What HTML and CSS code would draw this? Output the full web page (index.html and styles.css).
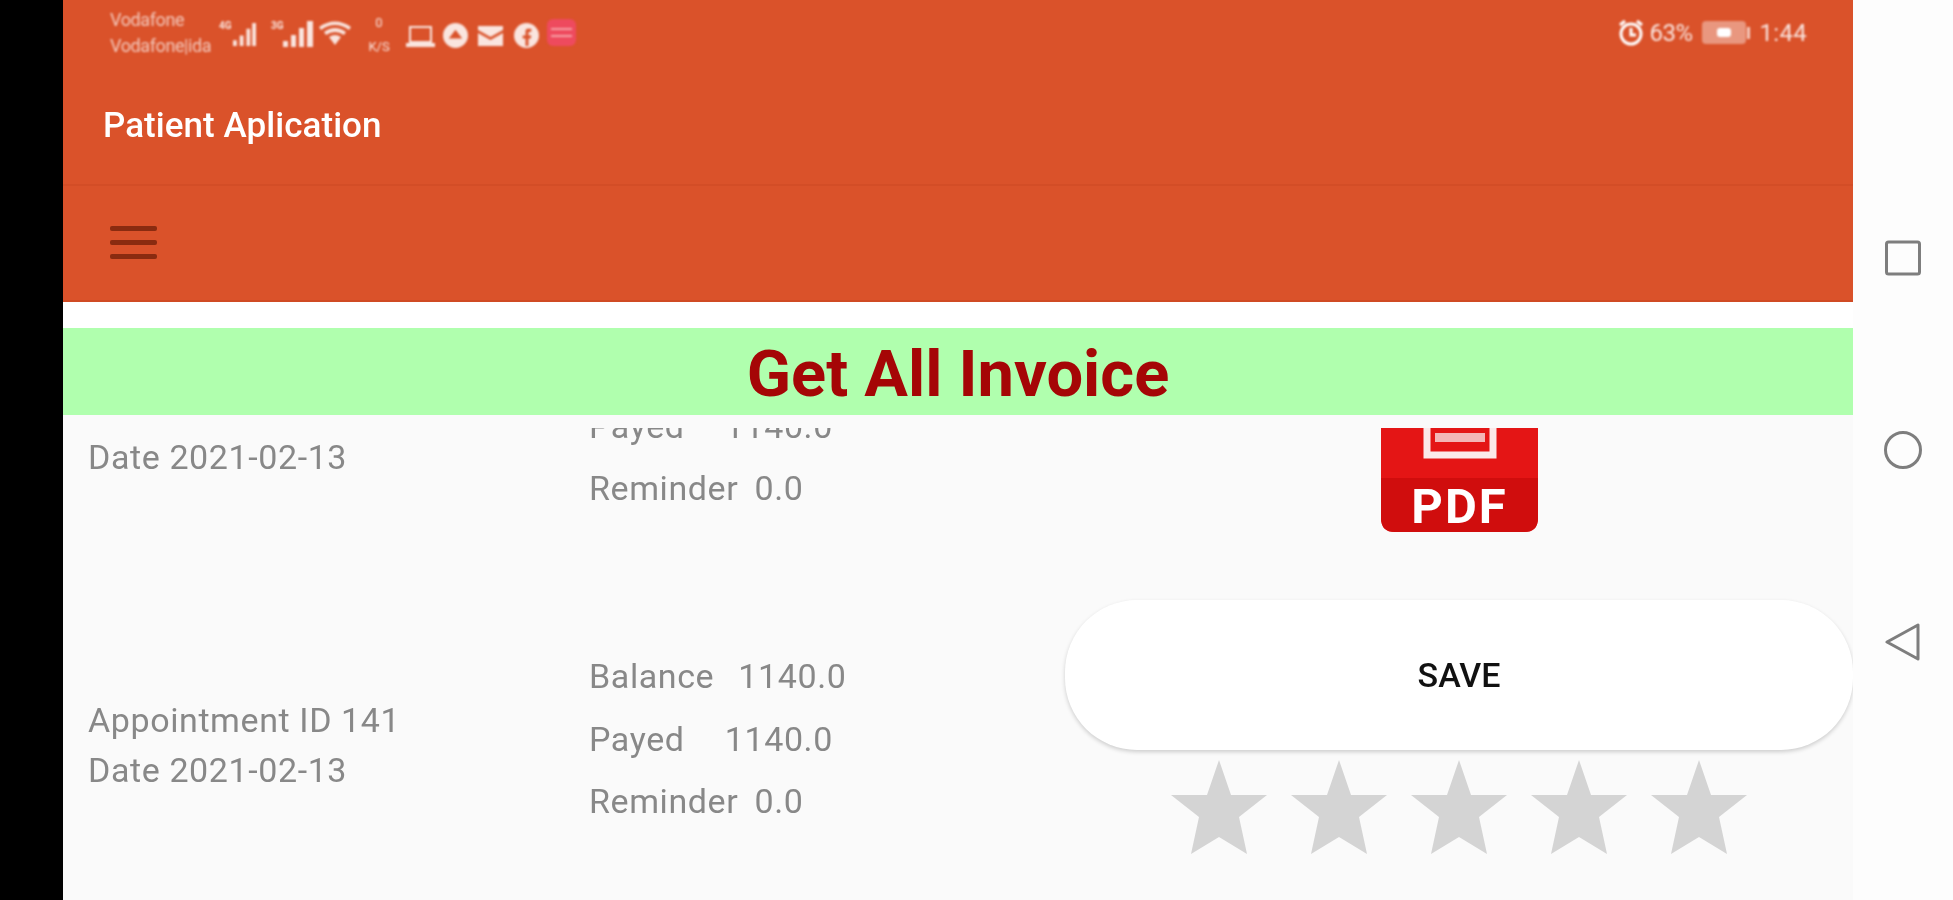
FILE: index.html
```html
<!DOCTYPE html>
<html lang="en">
<head>
    <meta charset="UTF-8">
    <title>Patient Aplication</title>
    <link rel="stylesheet" href="styles.css">
</head>
<body>
    <div class="left-edge"></div>
    <div class="app">
        <header class="header">
            <div class="status-bar">
                <div class="carriers">
                    <div>Vodafone</div>
                    <div>Vodafone|ida</div>
                </div>
                <span class="net-tag tag-4g">4G</span>
                <svg class="ic signal-a" viewBox="0 0 24 24"><path d="M0 24h4v-6H0zM7 24h4V13H7zM14 24h4V6h-4zM20 24h4V0h-4z"/></svg>
                <span class="net-tag tag-3g">3G</span>
                <svg class="ic signal-b" viewBox="0 0 30 26"><path d="M0 26h5v-6H0zM8 26h5V14H8zM16 26h5V7h-5zM24 26h6V0h-6z"/></svg>
                <svg class="ic wifi" viewBox="0 0 32 25"><path d="M0 6Q16-5 32 6l-2 3Q16-1 2 9zM5 11q11-8 22 0l-2 3q-9-6-18 0zM10 16q6-4 12 0L16 24z"/></svg>
                <div class="speed"><div>0</div><div>K/S</div></div>
                <svg class="ic laptop" viewBox="0 0 29 21"><path d="M3 0h23v17H3zM5 2v13h19V2zM0 17h29v4H0z" fill-rule="evenodd"/></svg>
                <svg class="ic round" viewBox="0 0 26 26"><path d="M13 0a13 13 0 1 0 0 26a13 13 0 1 0 0-26zM13 7l7 9H6z" fill-rule="evenodd"/></svg>
                <svg class="ic mail" viewBox="0 0 25 20"><path d="M0 0h25v4L12.500 11 0 4zM0 7l12.500 7L25 7v13H0z"/></svg>
                <svg class="ic round" viewBox="0 0 26 26"><path d="M13 0a13 13 0 1 0 0 26a13 13 0 1 0 0-26zM14 6h4v3h-2q-1 0-1 1v3h3l-.5 3H15v8h-3v-8H9v-3h3V9q0-3 2-3z" fill-rule="evenodd"/></svg>
                <div class="pink-app"><span></span><span></span></div>
                <div class="status-right">
                    <svg class="ic alarm" viewBox="0 0 26 27"><g fill="none" stroke="#fff" stroke-width="3"><circle cx="13" cy="15" r="10"/><path d="M13 9v7h5M2 6l5-4M24 6l-5-4"/></g></svg>
                    <span class="battery-pct">63%</span>
                    <div class="battery"><div class="battery-spark"></div></div>
                    <div class="battery-nub"></div>
                    <span class="clock">1:44</span>
                </div>
            </div>
            <div class="title-row">Patient Aplication</div>
            <div class="toolbar">
                <div class="menu-icon"><span></span><span></span><span></span></div>
            </div>
        </header>

        <div class="banner">Get All Invoice</div>

        <div class="content">
            <div class="list-view">
                <div class="list-inner">
                    <div class="invoice-row">
                        <div class="col-info">
                            <div>Appointment ID 141</div>
                            <div>Date 2021-02-13</div>
                        </div>
                        <div class="col-money">
                            <div>Balance   1140.0</div>
                            <div>Payed     1140.0</div>
                            <div>Reminder  0.0</div>
                        </div>
                        <div class="col-action pdf-col">
                            <svg class="pdf-icon" viewBox="0 0 157 157">
                                <path d="M0 0h157v143q0 14-14 14H14q-14 0-14-14z" fill="#e41515"/>
                                <path d="M0 103h157v40q0 14-14 14H14q-14 0-14-14z" fill="#d00d0d"/>
                                <path d="M46 30v50h66V30" fill="none" stroke="#fbe9e9" stroke-width="7"/>
                                <rect x="54" y="58" width="50" height="9" fill="#f3b6b6"/>
                                <text x="78.500" y="148" class="pdf-label" text-anchor="middle">PDF</text>
                            </svg>
                        </div>
                    </div>

                    <div class="invoice-row">
                        <div class="col-info">
                            <div>Appointment ID 141</div>
                            <div>Date 2021-02-13</div>
                        </div>
                        <div class="col-money">
                            <div>Balance   1140.0</div>
                            <div>Payed     1140.0</div>
                            <div>Reminder  0.0</div>
                        </div>
                        <div class="col-action">
                            <button class="save-btn">Save</button>
                            <div class="stars">
                                <svg viewBox="0 0 96 94"><path d="M48 0L60 35H96L68 57L76 94L48 77L20 94L28 57L0 35H36Z"/></svg>
                                <svg viewBox="0 0 96 94"><path d="M48 0L60 35H96L68 57L76 94L48 77L20 94L28 57L0 35H36Z"/></svg>
                                <svg viewBox="0 0 96 94"><path d="M48 0L60 35H96L68 57L76 94L48 77L20 94L28 57L0 35H36Z"/></svg>
                                <svg viewBox="0 0 96 94"><path d="M48 0L60 35H96L68 57L76 94L48 77L20 94L28 57L0 35H36Z"/></svg>
                                <svg viewBox="0 0 96 94"><path d="M48 0L60 35H96L68 57L76 94L48 77L20 94L28 57L0 35H36Z"/></svg>
                            </div>
                        </div>
                    </div>
                </div>
            </div>
        </div>
    </div>
    <nav class="nav-bar">
        <svg viewBox="0 0 38 38"><rect x="2.500" y="3" width="33" height="32" rx="2"/></svg>
        <svg viewBox="0 0 38 38"><circle cx="19" cy="19" r="17.500"/></svg>
        <svg viewBox="0 0 38 38"><path d="M3 19L34 2v34z" stroke-linejoin="round"/></svg>
    </nav>
</body>
</html>
```

FILE: styles.css
```css
* {
    box-sizing: border-box;
}
html, body {
    height: 100%;
}
body {
    margin: 0;
    display: flex;
    height: 900px;
    overflow: hidden;
    background: #fff;
    font-family: Roboto, 'Liberation Sans', sans-serif;
}
.left-edge {
    width: 63px;
    background: #000;
}
.app {
    width: 1790px;
    display: flex;
    flex-direction: column;
    background: #fff;
}

/* orange header */
.header {
    height: 302px;
    flex: none;
    background: #da522a;
    border-bottom: 2px solid #d04b24;
    margin-bottom: 26px;
    color: #fff;
}
.status-bar {
    height: 64px;
    display: flex;
    align-items: center;
    padding: 0 46px 0 47px;
    filter: blur(1px);
    color: rgba(255,255,255,0.85);
}
.carriers {
    width: 109px;
    font-size: 18px;
    line-height: 26px;
    letter-spacing: -0.4px;
    opacity: 0.8;
    margin-top: 2px;
    white-space: nowrap;
}
.net-tag {
    font-size: 10px;
    font-weight: 700;
    align-self: flex-start;
    margin-top: 20px;
}
.tag-4g {
    width: 14px;
}
.tag-3g {
    margin-left: 15px;
    width: 12px;
}
.ic {
    fill: rgba(255,255,255,0.85);
    flex: none;
}
.signal-a {
    width: 23px;
    height: 23px;
    margin-top: 5px;
}
.signal-b {
    width: 30px;
    height: 26px;
    margin-top: 3px;
}
.wifi {
    width: 32px;
    height: 25px;
    margin-left: 6px;
    margin-top: 3px;
}
.speed {
    width: 28px;
    margin-left: 14px;
    font-size: 13px;
    line-height: 24px;
    text-align: center;
    margin-top: 5px;
}
.laptop {
    width: 29px;
    height: 21px;
    margin-left: 13px;
    margin-top: 8px;
}
.round {
    width: 25px;
    height: 25px;
    margin-left: 8px;
    margin-top: 7px;
}
.mail {
    width: 25px;
    height: 20px;
    margin-left: 10px;
    margin-top: 7px;
}
.round + .mail + .round {
    margin-left: 11px;
}
.pink-app {
    width: 29px;
    height: 27px;
    margin-left: 8px;
    border-radius: 6px;
    background: #ee4a5e;
    display: flex;
    flex-direction: column;
    justify-content: center;
    gap: 5px;
    padding: 0 4px;
}
.pink-app span {
    height: 2px;
    background: #f7a0a6;
}
.status-right {
    margin-left: auto;
    display: flex;
    align-items: center;
    font-size: 24px;
    margin-top: 1px;
}
.alarm {
    width: 26px;
    height: 27px;
}
.battery-pct {
    margin-left: 5px;
    letter-spacing: -0.5px;
}
.battery {
    width: 44px;
    height: 23px;
    margin-left: 9px;
    border-radius: 4px;
    background: rgba(255,255,255,0.4);
    display: flex;
    align-items: center;
    justify-content: center;
}
.battery-spark {
    width: 14px;
    height: 9px;
    border-radius: 3px;
    background: #fff;
}
.battery-nub {
    width: 3px;
    height: 12px;
    margin-left: 1px;
    background: rgba(255,255,255,0.7);
}
.clock {
    margin-left: 10px;
    letter-spacing: 0.3px;
}
.title-row {
    height: 122px;
    padding: 2px 0 0 40px;
    display: flex;
    align-items: center;
    font-size: 35px;
    font-weight: 500;
    letter-spacing: 0.05px;
    filter: blur(0.5px);
    border-bottom: 2px solid #d34d26;
}
.toolbar {
    height: 114px;
    padding: 40px 0 0 47px;
}
.menu-icon {
    width: 47px;
    display: flex;
    flex-direction: column;
    gap: 9px;
    filter: blur(0.6px);
}
.menu-icon span {
    height: 5px;
    border-radius: 2px;
    background: #8a2b10;
}

/* green title */
.banner {
    height: 87px;
    flex: none;
    padding-top: 4px;
    background: #b0ffae;
    color: #a50606;
    font-size: 65px;
    font-weight: 700;
    display: flex;
    align-items: center;
    justify-content: center;
    filter: blur(0.5px);
}

/* invoice list, scrolled so first row is cut off */
.content {
    flex: 1;
    min-height: 0;
    background: #fafafa;
    padding-top: 13px;
}
.list-view {
    height: 100%;
    overflow: hidden;
}
.list-inner {
    margin-top: -161px;
}
.invoice-row {
    height: 313px;
    display: grid;
    grid-template-columns: 526px 476px 1fr;
    color: #888;
    font-size: 34px;
    letter-spacing: 0.6px;
    filter: blur(0.5px);
}
.col-info {
    padding: 17px 0 0 25px;
    line-height: 50px;
    display: flex;
    flex-direction: column;
    justify-content: center;
}
.col-money {
    padding-top: 5px;
    line-height: 62.5px;
    white-space: pre;
    word-spacing: -1px;
    display: flex;
    flex-direction: column;
    justify-content: center;
}
.col-action {
    padding-top: 20px;
    display: flex;
    flex-direction: column;
    align-items: center;
}
.pdf-col {
    padding-top: 108px;
}
.pdf-icon {
    width: 157px;
    height: 157px;
}
.pdf-label {
    font-size: 49px;
    font-weight: 700;
    letter-spacing: 2px;
    fill: #fff;
}
.save-btn {
    width: 100%;
    height: 150px;
    border: none;
    border-radius: 72px;
    background: #fff;
    box-shadow: 0 2px 4px rgba(0,0,0,0.18);
    font-family: inherit;
    font-size: 34px;
    font-weight: 500;
    letter-spacing: 0;
    text-transform: uppercase;
    color: #111;
}
.stars {
    display: flex;
    margin-top: 10px;
    gap: 24px;
}
.stars svg {
    width: 96px;
    height: 94px;
    fill: #d4d4d4;
}

/* android buttons */
.nav-bar {
    width: 100px;
    display: flex;
    flex-direction: column;
    align-items: center;
    justify-content: center;
    gap: 154px;
    background: #fdfdfd;
}
.nav-bar svg {
    width: 38px;
    height: 38px;
    fill: none;
    stroke: #7e7e7e;
    stroke-width: 3;
    filter: blur(0.4px);
}
```
